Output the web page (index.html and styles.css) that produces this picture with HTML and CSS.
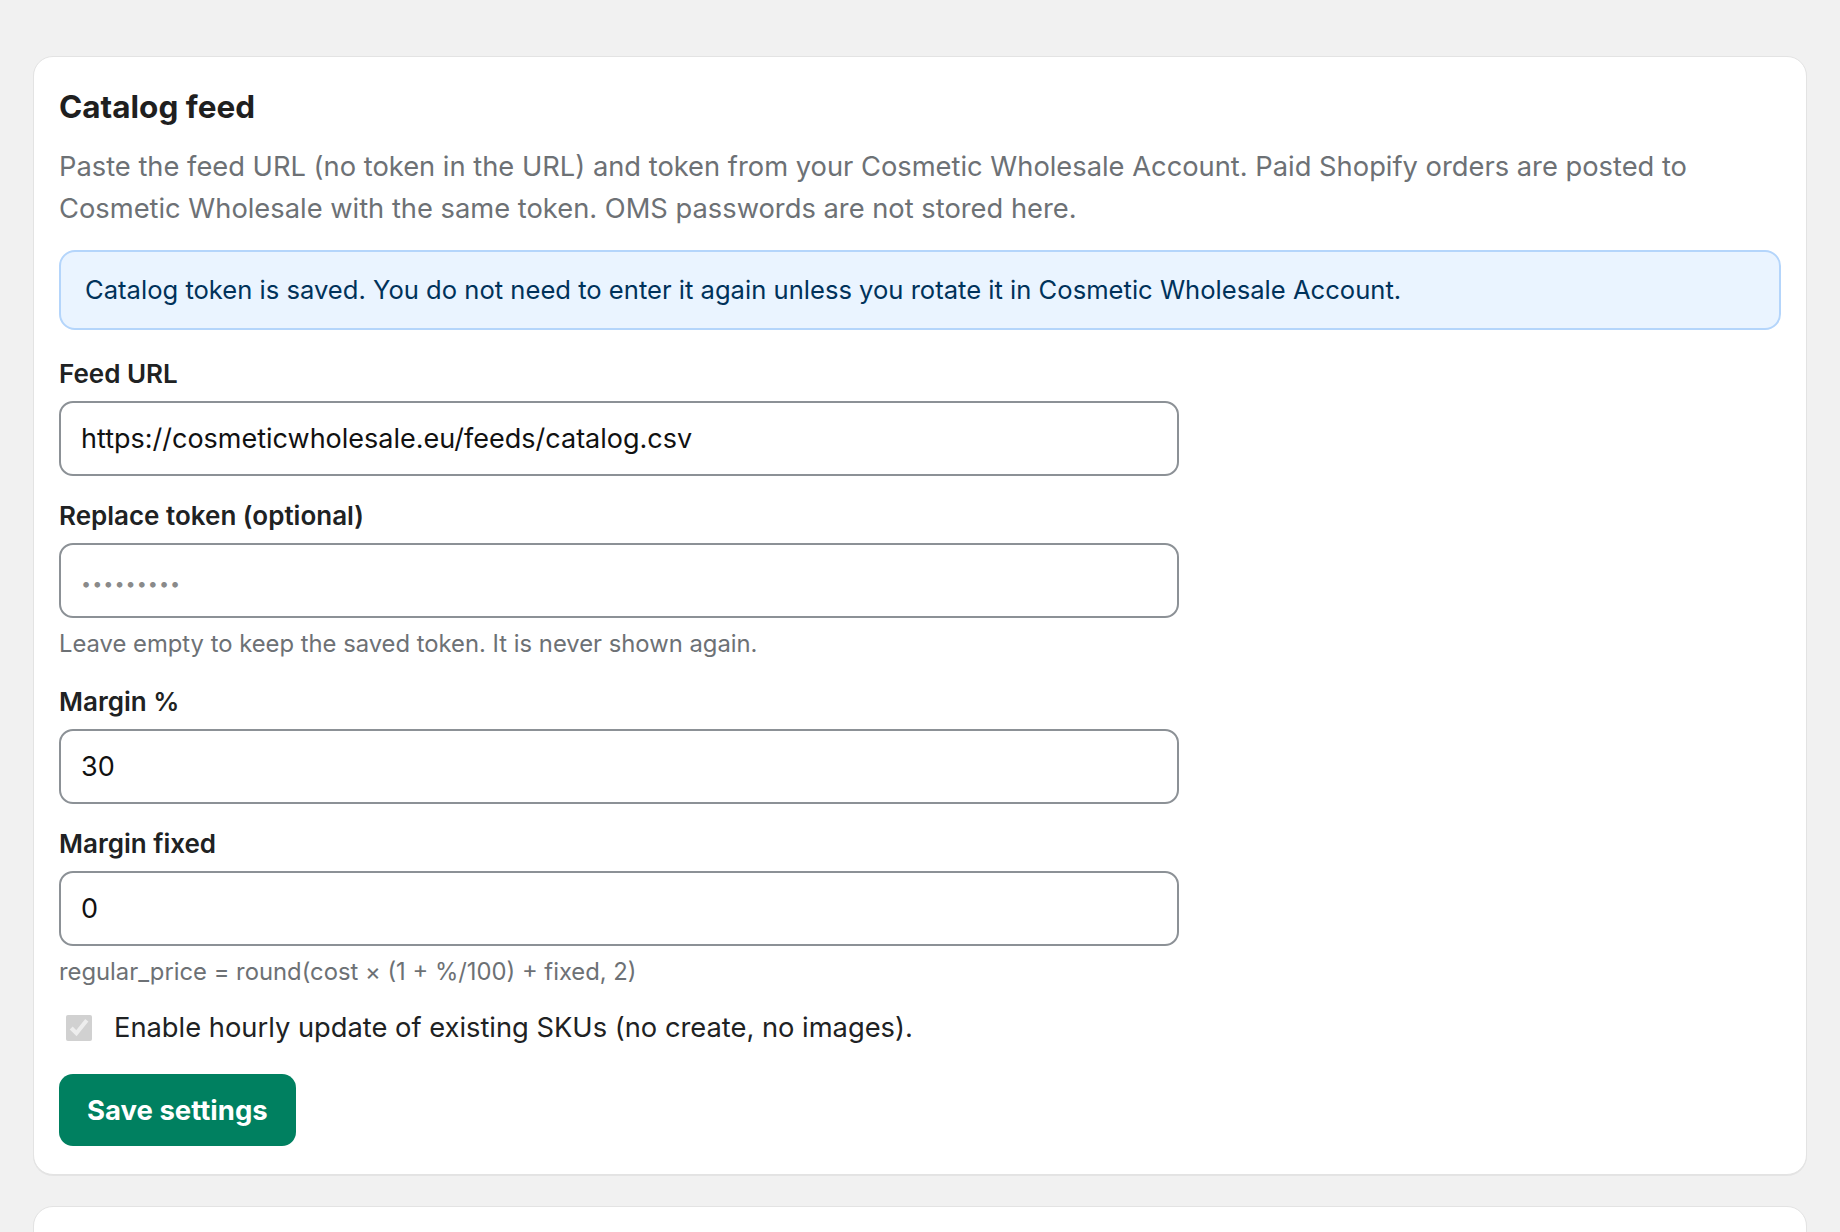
FILE: index.html
```html
<!DOCTYPE html>
<html>
<head>
  <meta charset="UTF-8">
  <title>Catalog feed</title>
  <link rel="stylesheet" href="styles.css">
</head>
<body>
  <div class="card">
    <h2 class="card-title">Catalog feed</h2>
    <p class="card-desc">Paste the feed URL (no token in the URL) and token from your Cosmetic Wholesale Account. Paid Shopify orders are posted to Cosmetic Wholesale with the same token. OMS passwords are not stored here.</p>

    <div class="notice">Catalog token is saved. You do not need to enter it again unless you rotate it in Cosmetic Wholesale Account.</div>

    <form class="settings-form" onsubmit="return false">
      <div class="field">
        <label for="feed-url">Feed URL</label>
        <input type="text" id="feed-url" value="https://cosmeticwholesale.eu/feeds/catalog.csv">
      </div>

      <div class="field">
        <label for="token">Replace token (optional)</label>
        <input type="password" id="token" placeholder="•••••••••">
        <div class="help">Leave empty to keep the saved token. It is never shown again.</div>
      </div>

      <div class="field">
        <label for="margin-pct">Margin %</label>
        <input type="text" id="margin-pct" value="30">
      </div>

      <div class="field">
        <label for="margin-fixed">Margin fixed</label>
        <input type="text" id="margin-fixed" value="0">
        <div class="help">regular_price = round(cost × (1 + %/100) + fixed, 2)</div>
      </div>

      <label class="check-row">
        <input type="checkbox" checked disabled>
        <span>Enable hourly update of existing SKUs (no create, no images).</span>
      </label>

      <div>
        <button type="submit" class="btn-primary">Save settings</button>
      </div>
    </form>
  </div>

  <div class="card card-next"></div>
</body>
</html>
```

FILE: styles.css
```css
* {
  margin: 0;
  padding: 0;
  box-sizing: border-box;
}

body {
  font-family: Inter, 'Noto Sans', Arial, sans-serif;
  background: #f1f1f1;
  color: #303030;
  padding: 56px 33px 0;
  height: 100vh;
  overflow: hidden;
}

.card {
  background: white;
  border: 1px solid #e3e3e3;
  border-radius: 20px;
  padding: 25px 25px 28px;
  box-shadow: 0 1px 0 rgba(0,0,0,0.05);
}

.card-next {
  margin-top: 31px;
  height: 200px;
}

.card-title {
  font-size: 31.5px;
  font-weight: 700;
  line-height: 50px;
  color: #1f1f1f;
}

.card-desc {
  margin-top: 14px;
  font-size: 27.3px;
  line-height: 42px;
  color: #6d7175;
}

.notice {
  margin-top: 20px;
  background: #eaf4ff;
  border: 2px solid #b4d5fb;
  border-radius: 16px;
  padding: 17px 24px;
  font-size: 25.6px;
  line-height: 42px;
  color: #00325a;
}

.settings-form {
  margin-top: 26px;
  display: flex;
  flex-direction: column;
  gap: 22px;
}

.field label {
  display: block;
  font-size: 26px;
  font-weight: 600;
  line-height: 36px;
  margin-bottom: 9px;
  color: #202223;
}

.field input {
  display: block;
  width: 1120px;
  height: 75px;
  padding: 0 20px;
  border: 2px solid #8c9196;
  border-radius: 14px;
  font-family: inherit;
  font-size: 27px;
  color: #111;
  outline: none;
}

.field input::placeholder {
  color: #8a8a8a;
  font-size: 18px;
  letter-spacing: 1px;
}

.help {
  margin-top: 8px;
  font-size: 23.8px;
  line-height: 36px;
  color: #6d7175;
}

.check-row {
  display: flex;
  align-items: center;
  gap: 22px;
  padding-left: 7px;
  margin-top: -5px;
  font-size: 27.3px;
  line-height: 42px;
  color: #202223;
}

.check-row input {
  width: 26px;
  height: 26px;
  accent-color: #d6d6d6;
}

.btn-primary {
  margin-top: 3px;
  height: 72px;
  padding: 0 28px;
  background: #008060;
  color: white;
  border: none;
  border-radius: 14px;
  font-family: inherit;
  font-size: 27.5px;
  font-weight: 700;
  cursor: pointer;
}
```
